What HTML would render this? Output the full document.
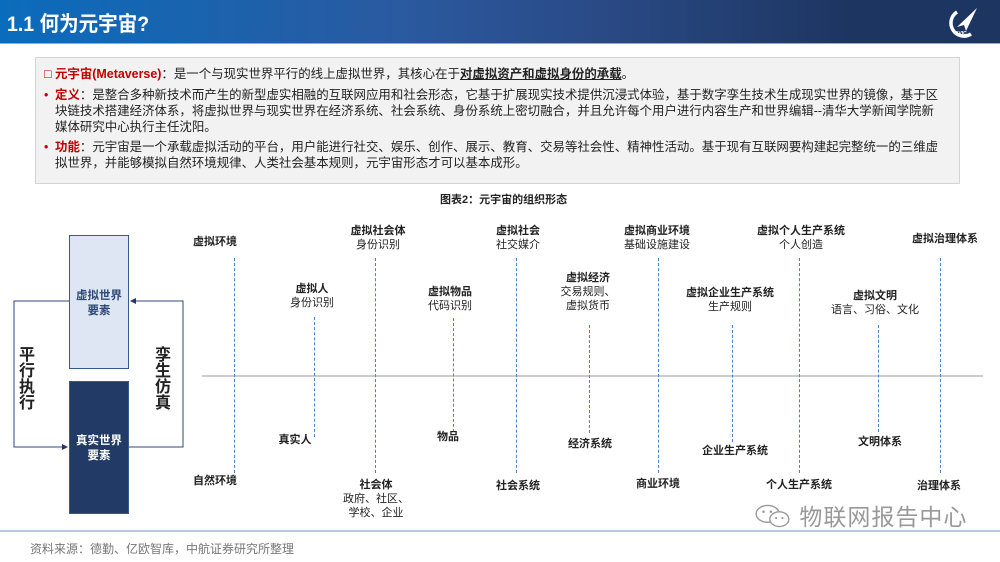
<!DOCTYPE html>
<html><head><meta charset="utf-8"><style>
*{margin:0;padding:0;box-sizing:border-box}
body{width:1000px;height:562px;position:relative;background:#fff;overflow:hidden;font-family:"Liberation Sans","Noto Sans CJK SC",sans-serif;color:#222}
.hdr{position:absolute;left:0;top:0;width:1000px;height:44px;background:linear-gradient(90deg,#0a6cbc 0%,#2a5aa0 40%,#2a4a86 60%,#1d3561 85%,#1d3561 100%);border-bottom:1px solid #9ab}
.hdr .t{position:absolute;left:7px;top:8px;color:#fff;font-size:21px;font-weight:bold;transform:scaleX(0.93);transform-origin:left}
.box{position:absolute;left:35px;top:57px;width:925px;height:127px;background:#f2f2f2;border:1px solid #d4d4d4;font-size:12.45px;line-height:16px;padding:8px 14px 0 8px}
.r{color:#c00000;font-weight:bold}
.box p{margin-bottom:4px}
.box .b{padding-left:11px;position:relative}
.box .b:before{content:"•";color:#c00000;position:absolute;left:0;top:0}
.abs{position:absolute;white-space:nowrap;font-size:11px;text-align:center;line-height:14px}
.bd{font-weight:bold}
.v{position:absolute;width:0;border-left:1.5px dashed #4a7fd4}
</style></head><body>
<div class="hdr"><div class="t">1.1 何为元宇宙?</div>
<svg style="position:absolute;left:944px;top:6px" width="36" height="34" viewBox="0 0 36 34"><path d="M13 6 A12 12 0 1 0 27 28" stroke="#fff" stroke-width="3.5" fill="none"/><path d="M33 2 L13 21 L20 19 L22 25 Z" fill="#fff"/><text x="17" y="29" fill="#fff" font-size="5" font-weight="bold" text-anchor="middle">AVIC</text></svg>
</div>
<div class="box">
<p style="margin-bottom:5px"><span class="r">□ 元宇宙(Metaverse)</span>：是一个与现实世界平行的线上虚拟世界，其核心在于<b><u>对虚拟资产和虚拟身份的承载</u></b>。</p>
<p class="b"><span class="r">定义</span>：是整合多种新技术而产生的新型虚实相融的互联网应用和社会形态，它基于扩展现实技术提供沉浸式体验，基于数字孪生技术生成现实世界的镜像，基于区块链技术搭建经济体系，将虚拟世界与现实世界在经济系统、社会系统、身份系统上密切融合，并且允许每个用户进行内容生产和世界编辑--清华大学新闻学院新媒体研究中心执行主任沈阳。</p>
<p class="b"><span class="r">功能</span>：元宇宙是一个承载虚拟活动的平台，用户能进行社交、娱乐、创作、展示、教育、交易等社会性、精神性活动。基于现有互联网要构建起完整统一的三维虚拟世界，并能够模拟自然环境规律、人类社会基本规则，元宇宙形态才可以基本成形。</p>
</div>
<div class="abs bd" style="left:440px;top:193px;width:120px">图表2：元宇宙的组织形态</div>

<svg style="position:absolute;left:0;top:0" width="1000" height="562">
<defs><marker id="a" markerWidth="6" markerHeight="6" refX="5" refY="3" orient="auto"><path d="M0 0L6 3L0 6Z" fill="#1f3864"/></marker></defs>
<rect x="69.5" y="235.5" width="59" height="133" fill="#dfe6f3" stroke="#3a5a8c"/>
<rect x="69.5" y="381.5" width="59" height="132" fill="#213a66" stroke="#3a5a8c"/>
<path d="M69 301H14V447H67" stroke="#2f4a7a" fill="none" marker-end="url(#a)"/>
<path d="M129 447H183V301H131" stroke="#2f4a7a" fill="none" marker-end="url(#a)"/>
<line x1="202" y1="376" x2="983" y2="376" stroke="#bbb" stroke-width="1.5"/>
<line x1="0" y1="531" x2="1000" y2="531" stroke="#6f93d0" stroke-width="1"/>
</svg>
<div class="abs bd" style="left:69px;top:289px;width:60px;color:#2f4a7a;font-size:11.5px;line-height:15px">虚拟世界<br>要素</div>
<div class="abs bd" style="left:69px;top:434px;width:60px;color:#fff;font-size:11.5px;line-height:15px">真实世界<br>要素</div>
<div class="abs bd" style="left:18px;top:348px;width:18px;font-size:16px;line-height:16px;white-space:normal">平行执行</div>
<div class="abs bd" style="left:154px;top:348px;width:18px;font-size:16px;line-height:16px;white-space:normal">孪生仿真</div>

<div class="v" style="left:234px;top:258px;height:215px"></div>
<div class="v" style="left:314px;top:317px;height:120px"></div>
<div class="v" style="left:375px;top:258px;height:215px"></div>
<div class="v" style="left:453px;top:318px;height:114px"></div>
<div class="v" style="left:516px;top:258px;height:215px"></div>
<div class="v" style="left:589px;top:325px;height:108px"></div>
<div class="v" style="left:658px;top:258px;height:215px"></div>
<div class="v" style="left:732px;top:325px;height:117px"></div>
<div class="v" style="left:799px;top:258px;height:215px"></div>
<div class="v" style="left:878px;top:325px;height:107px"></div>
<div class="v" style="left:940px;top:258px;height:215px"></div>

<div class="abs bd" style="left:175px;top:235px;width:80px">虚拟环境</div>
<div class="abs bd" style="left:175px;top:474px;width:80px">自然环境</div>
<div class="abs" style="left:272px;top:282px;width:80px"><b>虚拟人</b><br>身份识别</div>
<div class="abs bd" style="left:255px;top:433px;width:80px">真实人</div>
<div class="abs" style="left:338px;top:224px;width:80px"><b>虚拟社会体</b><br>身份识别</div>
<div class="abs" style="left:336px;top:478px;width:80px"><b>社会体</b><br>政府、社区、<br>学校、企业</div>
<div class="abs" style="left:410px;top:285px;width:80px"><b>虚拟物品</b><br>代码识别</div>
<div class="abs bd" style="left:408px;top:430px;width:80px">物品</div>
<div class="abs" style="left:478px;top:224px;width:80px"><b>虚拟社会</b><br>社交媒介</div>
<div class="abs bd" style="left:478px;top:479px;width:80px">社会系统</div>
<div class="abs" style="left:548px;top:271px;width:80px"><b>虚拟经济</b><br>交易规则、<br>虚拟货币</div>
<div class="abs bd" style="left:550px;top:437px;width:80px">经济系统</div>
<div class="abs" style="left:612px;top:224px;width:90px"><b>虚拟商业环境</b><br>基础设施建设</div>
<div class="abs bd" style="left:618px;top:477px;width:80px">商业环境</div>
<div class="abs" style="left:675px;top:286px;width:110px"><b>虚拟企业生产系统</b><br>生产规则</div>
<div class="abs bd" style="left:680px;top:444px;width:110px">企业生产系统</div>
<div class="abs" style="left:746px;top:224px;width:110px"><b>虚拟个人生产系统</b><br>个人创造</div>
<div class="abs bd" style="left:744px;top:478px;width:110px">个人生产系统</div>
<div class="abs" style="left:820px;top:289px;width:110px"><b>虚拟文明</b><br>语言、习俗、文化</div>
<div class="abs bd" style="left:825px;top:435px;width:110px">文明体系</div>
<div class="abs bd" style="left:895px;top:232px;width:100px">虚拟治理体系</div>
<div class="abs bd" style="left:889px;top:479px;width:100px">治理体系</div>

<div class="abs" style="left:754px;top:503px;font-size:23px;line-height:28px;color:#999;text-align:left;letter-spacing:1px">
<svg width="38" height="26" viewBox="0 0 36 24" style="vertical-align:-4px"><ellipse cx="13" cy="10" rx="11" ry="8" fill="none" stroke="#999" stroke-width="1.3"/><ellipse cx="24" cy="15" rx="9" ry="7" fill="#fff" stroke="#999" stroke-width="1.3"/><circle cx="9" cy="8" r="1.2" fill="#999"/><circle cx="16" cy="8" r="1.2" fill="#999"/><circle cx="21" cy="14" r="1" fill="#999"/><circle cx="27" cy="14" r="1" fill="#999"/></svg> 物联网报告中心</div>
<div class="abs" style="left:30px;top:542px;font-size:12px;color:#777;text-align:left">资料来源：德勤、亿欧智库，中航证券研究所整理</div>
</body></html>
